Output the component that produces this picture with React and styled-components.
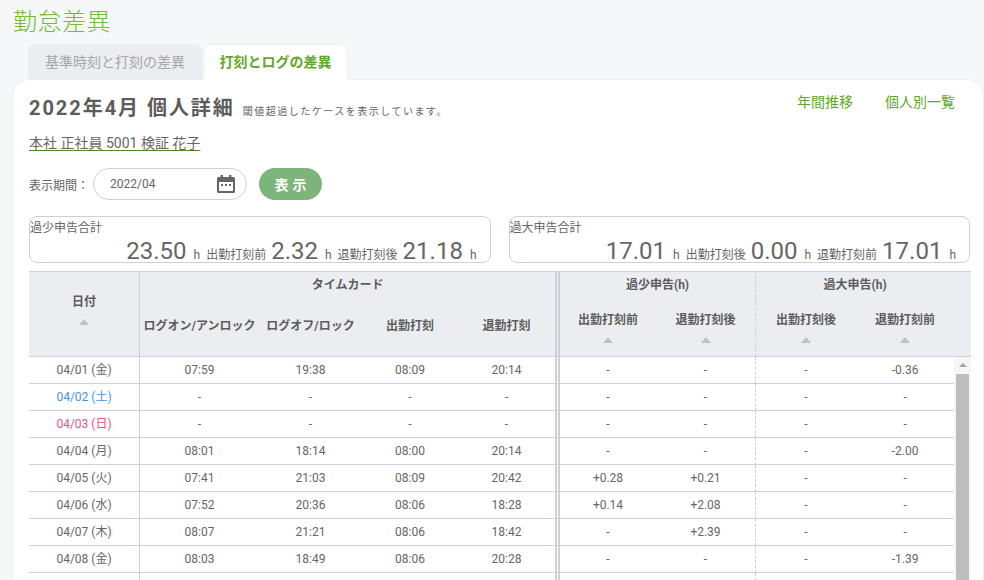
import React from 'react';
import styled, { createGlobalStyle } from 'styled-components';

const GlobalStyle = createGlobalStyle`
  html, body {
    margin: 0;
    height: 580px;
    overflow: hidden;
    background: #f6f7f9;
    font-family: Roboto, "Noto Sans CJK JP", sans-serif;
    color: #666;
  }
`;

const Page = styled.div`
  padding: 4px 0 0 12px;
`;

const Title = styled.h1`
  margin: 0;
  height: 40px;
  padding-left: 1px;
  font-size: 24px;
  line-height: 36px;
  font-weight: 300;
  letter-spacing: 0.5px;
  color: #72bd2e;
`;

const Tabs = styled.div`
  display: flex;
  gap: 1px;
  margin-left: 16px;
  height: 35px;
`;

const Tab = styled.div`
  box-sizing: border-box;
  width: ${(p) => p.$width}px;
  text-align: center;
  font-size: 14px;
  line-height: 37px;
  border-radius: 8px 8px 0 0;
  ${(p) =>
    p.$active
      ? `
    background: #fff;
    color: #62a828;
    font-weight: 700;
    border: 1px solid #eceef1;
    border-bottom: 0;
    line-height: 35px;
    position: relative;
    z-index: 1;
    margin-bottom: -1px;
  `
      : `
    background: #ebedf0;
    color: #a3a6aa;
  `}
`;

const Card = styled.div`
  background: #fff;
  border: 1px solid #eceef1;
  border-radius: 16px 16px 0 0;
  padding: 0 13px 0 16px;
  height: 520px;
  overflow: hidden;
`;

const HeadRow = styled.div`
  display: flex;
  justify-content: space-between;
  height: 52px;
`;

const Heading = styled.div`
  display: flex;
  align-items: baseline;
  gap: 8px;
  padding-top: 12px;
`;

const HeadingMain = styled.span`
  font-size: 20px;
  font-weight: 700;
  letter-spacing: 1.95px;
  color: #5c5c5c;
`;

const HeadingNote = styled.span`
  font-size: 10px;
  letter-spacing: 1.5px;
`;

const SideLinks = styled.div`
  display: flex;
  gap: 32px;
  padding: 12px 15px 0 0;
  font-size: 14px;
  line-height: 20px;
  color: #62a828;
`;

const PersonLink = styled.div`
  font-size: 14px;
  line-height: 22px;
  height: 36px;
  text-decoration: underline;
  text-decoration-color: #4b8a1c;
  text-underline-offset: 2px;
`;

const FilterRow = styled.div`
  display: flex;
  align-items: center;
  height: 32px;
  margin-bottom: 16px;
  font-size: 12px;
`;

const FilterLabel = styled.span`
  width: 64px;
`;

const DateField = styled.div`
  box-sizing: border-box;
  display: flex;
  align-items: center;
  justify-content: space-between;
  width: 154px;
  height: 32px;
  padding: 0 10px 0 16px;
  border: 1px solid #ccd1d8;
  border-radius: 16px;
`;

const ShowButton = styled.button`
  width: 63px;
  height: 32px;
  margin-left: 12px;
  padding: 0 0 0 4px;
  border: 0;
  border-radius: 16px;
  background: #7db47a;
  color: #fff;
  font: 700 14px Roboto, "Noto Sans CJK JP", sans-serif;
  letter-spacing: 4px;
`;

const Summaries = styled.div`
  display: flex;
  gap: 18px;
  margin-bottom: 8px;
`;

const SummaryBox = styled.div`
  box-sizing: border-box;
  width: 462px;
  height: 47px;
  padding: 3px 13px 0 0;
  border: 1px solid #ccd1d8;
  border-radius: 8px;
`;

const SummaryLabel = styled.div`
  font-size: 12px;
  line-height: 16px;
`;

const SummaryValues = styled.div`
  display: flex;
  justify-content: flex-end;
  align-items: baseline;
  height: 26px;
  margin-top: 2px;
  line-height: 26px;
  font-size: 12px;
  white-space: pre;
`;

const BigNumber = styled.span`
  font-size: 24px;
  margin: 0 7px 0 5px;
`;

const SmallLabel = styled.span`
  margin-left: 6px;
`;

const TableWrap = styled.div`
  position: relative;
  width: 942px;
`;

const Table = styled.table`
  width: 942px;
  table-layout: fixed;
  border-collapse: separate;
  border-spacing: 0;
  font-size: 12px;
`;

const Th = styled.th`
  box-sizing: border-box;
  padding: 0 0 ${(p) => p.$lift || 0}px;
  background: #ebedf0;
  color: #5c5c5c;
  font-weight: 700;
  white-space: nowrap;
  text-align: center;
  vertical-align: ${(p) => (p.$top ? 'top' : 'middle')};
  ${(p) => p.$first && 'border-top: 1px solid #ccd1d8;'}
  ${(p) => p.$last && 'border-bottom: 1px solid #ccd1d8;'}
  ${(p) => p.$divide && 'border-right: 1px solid #ccd1d8;'}
  ${(p) => p.$double && 'border-right: 5px double #ccd1d8;'}
  ${(p) => p.$dashed && 'border-right: 1px dashed #ccd1d8;'}
  ${(p) => p.$gutter && 'padding-right: 17px;'}
`;

const GroupLabel = styled.div`
  height: 25px;
  line-height: 26px;
`;

const SortLabel = styled.div`
  display: flex;
  flex-direction: column;
  align-items: center;
  gap: 10px;
`;

const SortArrow = styled.span`
  width: 0;
  height: 0;
  border-left: 5px solid transparent;
  border-right: 5px solid transparent;
  border-bottom: 6px solid #bcc2ca;
`;

const Td = styled.td`
  box-sizing: border-box;
  height: 27px;
  padding: 0 0 1px;
  line-height: 14px;
  text-align: center;
  white-space: nowrap;
  border-bottom: 1px solid #ccd1d8;
  color: ${(p) => p.$color || '#666'};
  ${(p) => p.$divide && 'border-right: 1px solid #ccd1d8;'}
  ${(p) => p.$double && 'border-right: 5px double #ccd1d8;'}
  ${(p) => p.$dashed && 'border-right: 1px dashed #ccd1d8;'}
  ${(p) => p.$gutter && 'padding-right: 17px;'}
`;

const Scrollbar = styled.div`
  position: absolute;
  top: 86px;
  right: 0;
  bottom: 0;
  width: 17px;
  background: #f6f6f6;
`;

const ScrollArrow = styled.div`
  width: 0;
  height: 0;
  margin: 6px auto 7px;
  border-left: 4px solid transparent;
  border-right: 4px solid transparent;
  border-bottom: 4px solid #a3a3a3;
`;

const ScrollThumb = styled.div`
  height: 300px;
  margin: 0 2px;
  background: #bdbdbd;
`;

const CalendarIcon = () => (
  <svg width="20" height="20" viewBox="0 0 20 20" fill="none">
    <path
      fill="#666"
      fillRule="evenodd"
      d="M2.5 3H4.5V1H7V3H13V1H15.5V3H17.5A1.5 1.5 0 0 1 19 4.5V17.5A1.5 1.5 0 0 1 17.5 19H2.5A1.5 1.5 0 0 1 1 17.5V4.5A1.5 1.5 0 0 1 2.5 3ZM3 8V17H17V8Z"
    />
    <path fill="#666" d="M5 10h2v2H5zM9 10h2v2H9zM13 10h2v2h-2z" />
  </svg>
);

const rows = [
  ['04/01 (金)', '07:59', '19:38', '08:09', '20:14', '-', '-', '-', '-0.36'],
  ['04/02 (土)', '-', '-', '-', '-', '-', '-', '-', '-'],
  ['04/03 (日)', '-', '-', '-', '-', '-', '-', '-', '-'],
  ['04/04 (月)', '08:01', '18:14', '08:00', '20:14', '-', '-', '-', '-2.00'],
  ['04/05 (火)', '07:41', '21:03', '08:09', '20:42', '+0.28', '+0.21', '-', '-'],
  ['04/06 (水)', '07:52', '20:36', '08:06', '18:28', '+0.14', '+2.08', '-', '-'],
  ['04/07 (木)', '08:07', '21:21', '08:06', '18:42', '-', '+2.39', '-', '-'],
  ['04/08 (金)', '08:03', '18:49', '08:06', '20:28', '-', '-', '-', '-1.39'],
  ['', '', '', '', '', '', '', '', ''],
];

const dayColor = (label) => {
  if (label.includes('土')) return '#3f97e6';
  if (label.includes('日')) return '#e8557f';
  return undefined;
};

const Summary = ({ label, total, first, second }) => (
  <SummaryBox>
    <SummaryLabel>{label}</SummaryLabel>
    <SummaryValues>
      <BigNumber>{total}</BigNumber>h
      <SmallLabel>{first[0]}</SmallLabel>
      <BigNumber>{first[1]}</BigNumber>h
      <SmallLabel>{second[0]}</SmallLabel>
      <BigNumber>{second[1]}</BigNumber>h
    </SummaryValues>
  </SummaryBox>
);

const SortHead = ({ children, ...rest }) => (
  <Th $last {...rest}>
    <SortLabel>
      {children}
      <SortArrow />
    </SortLabel>
  </Th>
);

export default function App() {
  return (
    <Page>
      <GlobalStyle />
      <Title>勤怠差異</Title>
      <Tabs>
        <Tab $width={174}>基準時刻と打刻の差異</Tab>
        <Tab $width={145} $active>打刻とログの差異</Tab>
      </Tabs>
      <Card>
        <HeadRow>
          <Heading>
            <HeadingMain>2022年4月 個人詳細</HeadingMain>
            <HeadingNote>閾値超過したケースを表示しています。</HeadingNote>
          </Heading>
          <SideLinks>
            <span>年間推移</span>
            <span>個人別一覧</span>
          </SideLinks>
        </HeadRow>
        <PersonLink>本社 正社員 5001 検証 花子</PersonLink>
        <FilterRow>
          <FilterLabel>表示期間：</FilterLabel>
          <DateField>
            2022/04
            <CalendarIcon />
          </DateField>
          <ShowButton>表示</ShowButton>
        </FilterRow>
        <Summaries>
          <Summary label="過少申告合計" total="23.50" first={['出勤打刻前', '2.32']} second={['退勤打刻後', '21.18']} />
          <Summary label="過大申告合計" total="17.01" first={['出勤打刻後', '0.00']} second={['退勤打刻前', '17.01']} />
        </Summaries>
        <TableWrap>
          <Table>
            <colgroup>
              <col width="111" />
              <col width="119" />
              <col width="103" />
              <col width="96" />
              <col width="102" />
              <col width="96" />
              <col width="100" />
              <col width="100" />
              <col width="115" />
            </colgroup>
            <thead>
              <tr>
                <Th rowSpan={2} $first $last $divide $lift={12}>
                  <SortLabel>
                    日付
                    <SortArrow />
                  </SortLabel>
                </Th>
                <Th colSpan={4} $first $double $top><GroupLabel>タイムカード</GroupLabel></Th>
                <Th colSpan={2} $first $dashed $top><GroupLabel>過少申告(h)</GroupLabel></Th>
                <Th colSpan={2} $first $gutter $top><GroupLabel>過大申告(h)</GroupLabel></Th>
              </tr>
              <tr style={{ height: 60 }}>
                <Th $last $lift={4}>ログオン/アンロック</Th>
                <Th $last $lift={4}>ログオフ/ロック</Th>
                <Th $last $lift={4}>出勤打刻</Th>
                <Th $last $double $lift={4}>退勤打刻</Th>
                <SortHead>出勤打刻前</SortHead>
                <SortHead $dashed>退勤打刻後</SortHead>
                <SortHead>出勤打刻後</SortHead>
                <SortHead $gutter>退勤打刻前</SortHead>
              </tr>
            </thead>
            <tbody>
              {rows.map((row, i) => (
                <tr key={i}>
                  <Td $divide $color={dayColor(row[0])}>{row[0]}</Td>
                  <Td>{row[1]}</Td>
                  <Td>{row[2]}</Td>
                  <Td>{row[3]}</Td>
                  <Td $double>{row[4]}</Td>
                  <Td>{row[5]}</Td>
                  <Td $dashed>{row[6]}</Td>
                  <Td>{row[7]}</Td>
                  <Td $gutter>{row[8]}</Td>
                </tr>
              ))}
            </tbody>
          </Table>
          <Scrollbar>
            <ScrollArrow />
            <ScrollThumb />
          </Scrollbar>
        </TableWrap>
      </Card>
    </Page>
  );
}
